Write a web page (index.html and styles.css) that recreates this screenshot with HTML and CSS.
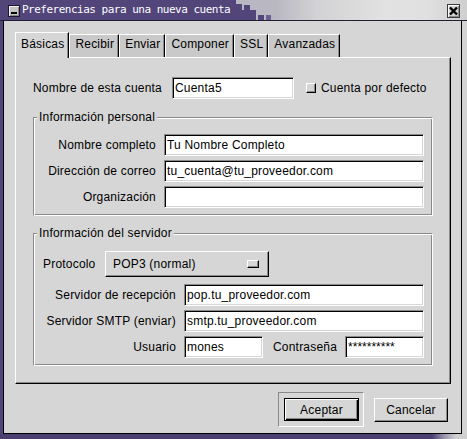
FILE: index.html
```html
<!DOCTYPE html>
<html lang="es">
<head>
<meta charset="utf-8">
<title>Preferencias para una nueva cuenta</title>
<link rel="stylesheet" href="styles.css">
</head>
<body>
<div class="window">
  <div class="titlebar">
    <div class="tb-purple">
      <span class="tb-min"><span class="tb-min-bar"></span></span>
      <span class="tb-title">Preferencias para una nueva cuenta</span>
    </div>
    <svg class="tb-steps" width="40" height="20" viewBox="0 0 40 20">
      <rect x="0" y="0" width="40" height="20" fill="#b9b7c2"/>
      <rect x="0" y="4" width="6" height="16" fill="#514579"/>
      <rect x="8" y="5" width="6" height="5" fill="#514579"/>
      <rect x="6" y="10" width="8" height="10" fill="#514579"/>
      <rect x="14" y="10" width="6" height="5" fill="#514579"/>
      <rect x="14" y="15" width="6" height="5" fill="#514579"/>
      <rect x="22" y="15" width="6" height="5" fill="#514579"/>
      <rect x="30" y="15" width="5" height="5" fill="#6a6090"/>
    </svg>
    <div class="tb-fill">
      <span class="tb-close">
        <svg width="11" height="12" viewBox="0 0 11 12"><path d="M2 2.5 L9 9.5 M9 2.5 L2 9.5" stroke="#000" stroke-width="2.4" fill="none"/></svg>
      </span>
    </div>
  </div>
  <div class="frame">
    <div class="edge-left"></div>
    <div class="content">
      <div class="notebook">
        <div class="tabs">
          <span class="tab active">Básicas</span>
          <span class="tab">Recibir</span>
          <span class="tab">Enviar</span>
          <span class="tab">Componer</span>
          <span class="tab">SSL</span>
          <span class="tab">Avanzadas</span>
        </div>
        <div class="page">
          <div class="row-account">
            <span class="acc-label">Nombre de esta cuenta</span>
            <span class="entry acc-entry">Cuenta5</span>
            <span class="check"></span>
            <span class="check-label">Cuenta por defecto</span>
          </div>
          <fieldset class="group">
            <legend>Información personal</legend>
            <div class="form form-personal">
              <span class="lbl">Nombre completo</span><span class="entry">Tu Nombre Completo</span>
              <span class="lbl">Dirección de correo</span><span class="entry">tu_cuenta@tu_proveedor.com</span>
              <span class="lbl">Organización</span><span class="entry"></span>
            </div>
          </fieldset>
          <fieldset class="group group-server">
            <legend>Información del servidor</legend>
            <div class="proto-row">
              <span class="proto-label">Protocolo</span>
              <span class="option">POP3 (normal)<span class="opt-ind"></span></span>
            </div>
            <div class="form form-server">
              <span class="lbl">Servidor de recepción</span><span class="entry">pop.tu_proveedor.com</span>
              <span class="lbl">Servidor SMTP (enviar)</span><span class="entry">smtp.tu_proveedor.com</span>
              <span class="lbl">Usuario</span>
              <div class="user-row">
                <span class="entry user-entry">mones</span>
                <span class="pass-label">Contraseña</span>
                <span class="entry pass-entry">**********</span>
              </div>
            </div>
          </fieldset>
        </div>
      </div>
      <div class="buttons">
        <div class="default-frame"><button class="btn btn-default">Aceptar</button></div>
        <button class="btn btn-cancel">Cancelar</button>
      </div>
    </div>
    <div class="edge-right"></div>
  </div>
  <div class="edge-bottom"></div>
</div>
</body>
</html>
```
FILE: styles.css
```css
* { box-sizing: border-box; }

body {
  margin: 0;
  font-family: "Liberation Sans", Arial, sans-serif;
  font-size: 12px;
  color: #000;
  background: #d6d6d6;
}

.window {
  width: 467px;
  height: 439px;
  display: flex;
  flex-direction: column;
  background: #d6d6d6;
  overflow: hidden;
  letter-spacing: 0.2px;
}

/* ---------- title bar ---------- */
.titlebar {
  height: 21px;
  flex: none;
  display: flex;
  border-bottom: 1px solid #241d36;
}

.tb-purple {
  width: 236px;
  background: #514579;
  display: flex;
  align-items: flex-start;
  padding: 5px 0 0 8px;
}

.tb-min {
  width: 12px;
  height: 12px;
  flex: none;
  background: #c4c4c4;
  border: 1px solid #1d1730;
  box-shadow: inset 1px 1px 0 #f0f0f0, inset -1px -1px 0 #8a8a8a;
  display: flex;
  align-items: flex-end;
  justify-content: center;
  padding-bottom: 2px;
}

.tb-min-bar {
  width: 6px;
  height: 2px;
  background: #000;
}

.tb-title {
  margin-left: 2px;
  margin-top: -2px;
  font-family: "DejaVu Sans Mono", monospace;
  font-size: 11px;
  letter-spacing: -0.5px;
  line-height: 14px;
  color: #fff;
  white-space: nowrap;
}

.tb-steps {
  flex: none;
  display: block;
}

.tb-fill {
  flex: 1;
  background: linear-gradient(to right, #b9b7c2 0, #d2d2d4 40px, #e2e2e2 110px, #e0e0e0 150px, #cfcfcf 100%);
  display: flex;
  justify-content: flex-end;
  padding: 4px 7px 0 0;
}

.tb-close {
  width: 13px;
  height: 14px;
  background: #cfcfcf;
  border: 1px solid #3a3a3a;
  box-shadow: inset 1px 1px 0 #fff, inset -1px -1px 0 #8a8a8a;
  display: flex;
  align-items: center;
  justify-content: center;
}

.tb-close svg { display: block; }

/* ---------- window frame ---------- */
.frame {
  flex: 1;
  display: flex;
  min-height: 0;
}

.edge-left {
  width: 3px;
  background: #514579;
}

.edge-right {
  width: 5px;
  background: #d3d3d3;
}

.edge-bottom {
  height: 5px;
  flex: none;
  background: linear-gradient(to right, #4a3f70 0, #4a3f70 432px, #9a94ae 444px, #d0d0d0 456px);
}

.content {
  flex: 1;
  border-left: 1px solid #000;
  border-right: 1px solid #000;
  border-bottom: 1px solid #000;
  padding: 11px 10px 6px 11px;
  display: flex;
  flex-direction: column;
}

/* ---------- notebook ---------- */
.tabs {
  display: flex;
  align-items: flex-end;
  height: 25px;
}

.tab {
  height: 23px;
  padding: 2px 4px 0 5px;
  line-height: 15px;
  background: #c9c9c9;
  border-left: 1px solid #fff;
  border-top: 1px solid #fff;
  border-right: 1px solid #000;
  box-shadow: inset -1px 0 0 #8a8a8a;
  white-space: nowrap;
}

.tab.active {
  height: 26px;
  margin-bottom: -1px;
  padding-top: 4px;
  background: #d6d6d6;
  position: relative;
  z-index: 1;
}

.page {
  height: 327px;
  border: 1px solid;
  border-color: #fff #000 #000 #fff;
  box-shadow: inset -1px -1px 0 #8a8a8a;
  padding: 19px 17px 0 17px;
}

.row-account {
  display: flex;
  align-items: center;
  height: 22px;
}

.acc-label {
  width: 139px;
  white-space: nowrap;
}

.acc-entry {
  width: 122px;
  padding-left: 4px;
}

.check {
  width: 10px;
  height: 10px;
  margin-left: 12px;
  background: #d6d6d6;
  border: 1px solid;
  border-color: #fff #000 #000 #fff;
  box-shadow: inset -1px -1px 0 #8a8a8a;
}

.check-label {
  margin-left: 5px;
}

/* entries */
.entry {
  display: block;
  height: 22px;
  background: #fff;
  border: 1px solid;
  border-color: #8a8a8a #fff #fff #8a8a8a;
  box-shadow: inset 1px 1px 0 #000, inset -1px -1px 0 #d6d6d6;
  padding: 0 2px;
  line-height: 20px;
  white-space: nowrap;
  overflow: hidden;
}

/* frames */
.group {
  margin: 11px 0 0;
  padding: 0;
  min-width: 0;
  border: 1px solid;
  border-color: #8a8a8a #fff #fff #8a8a8a;
  box-shadow: inset 1px 1px 0 #fff, inset -1px -1px 0 #8a8a8a;
}

.group-server {
  margin-top: 10px;
}

.group legend {
  margin-left: 3px;
  padding: 0 2px;
  line-height: 14px;
  background: #d6d6d6;
}

.form {
  display: grid;
  align-items: center;
  column-gap: 8px;
  row-gap: 4px;
  padding: 10px 8px 7px 0;
}

.form-personal {
  grid-template-columns: 122px 1fr;
}

.form-server {
  grid-template-columns: 142px 1fr;
  padding-top: 7px;
}

.lbl {
  text-align: right;
  white-space: nowrap;
}

.proto-row {
  display: flex;
  align-items: center;
  padding: 11px 0 0 9px;
}

.proto-label {
  width: 62px;
}

.option {
  width: 164px;
  height: 26px;
  display: flex;
  align-items: center;
  justify-content: space-between;
  padding: 0 9px 0 7px;
  border: 1px solid;
  border-color: #fff #000 #000 #fff;
  box-shadow: inset -1px -1px 0 #8a8a8a;
}

.opt-ind {
  width: 12px;
  height: 8px;
  border: 1px solid;
  border-color: #fff #000 #000 #fff;
  box-shadow: inset -1px -1px 0 #8a8a8a;
}

.user-row {
  display: flex;
  align-items: center;
}

.user-entry {
  width: 79px;
}

.pass-label {
  margin: 0 8px 0 10px;
}

.pass-entry {
  flex: 1;
  letter-spacing: 0;
}

/* ---------- buttons ---------- */
.buttons {
  display: flex;
  justify-content: flex-end;
  align-items: center;
  margin-top: 8px;
  padding-right: 3px;
}

.default-frame {
  width: 86px;
  height: 35px;
  border: 1px solid;
  border-color: #8a8a8a #fff #fff #8a8a8a;
  padding: 5px 4px 5px 5px;
}

.btn {
  font-family: "Liberation Sans", Arial, sans-serif;
  font-size: 12px;
  letter-spacing: 0.2px;
  color: #000;
  background: #d6d6d6;
  padding: 0;
  margin: 0;
  display: block;
}

.btn-default {
  width: 75px;
  height: 23px;
  border: 1px solid #000;
  box-shadow: inset 1px 1px 0 #fff, inset -1px -1px 0 #000, inset -2px -2px 0 #8a8a8a;
}

.btn-cancel {
  width: 74px;
  height: 24px;
  margin-left: 10px;
  border: 1px solid;
  border-color: #fff #000 #000 #fff;
  box-shadow: inset -1px -1px 0 #8a8a8a;
}
```
